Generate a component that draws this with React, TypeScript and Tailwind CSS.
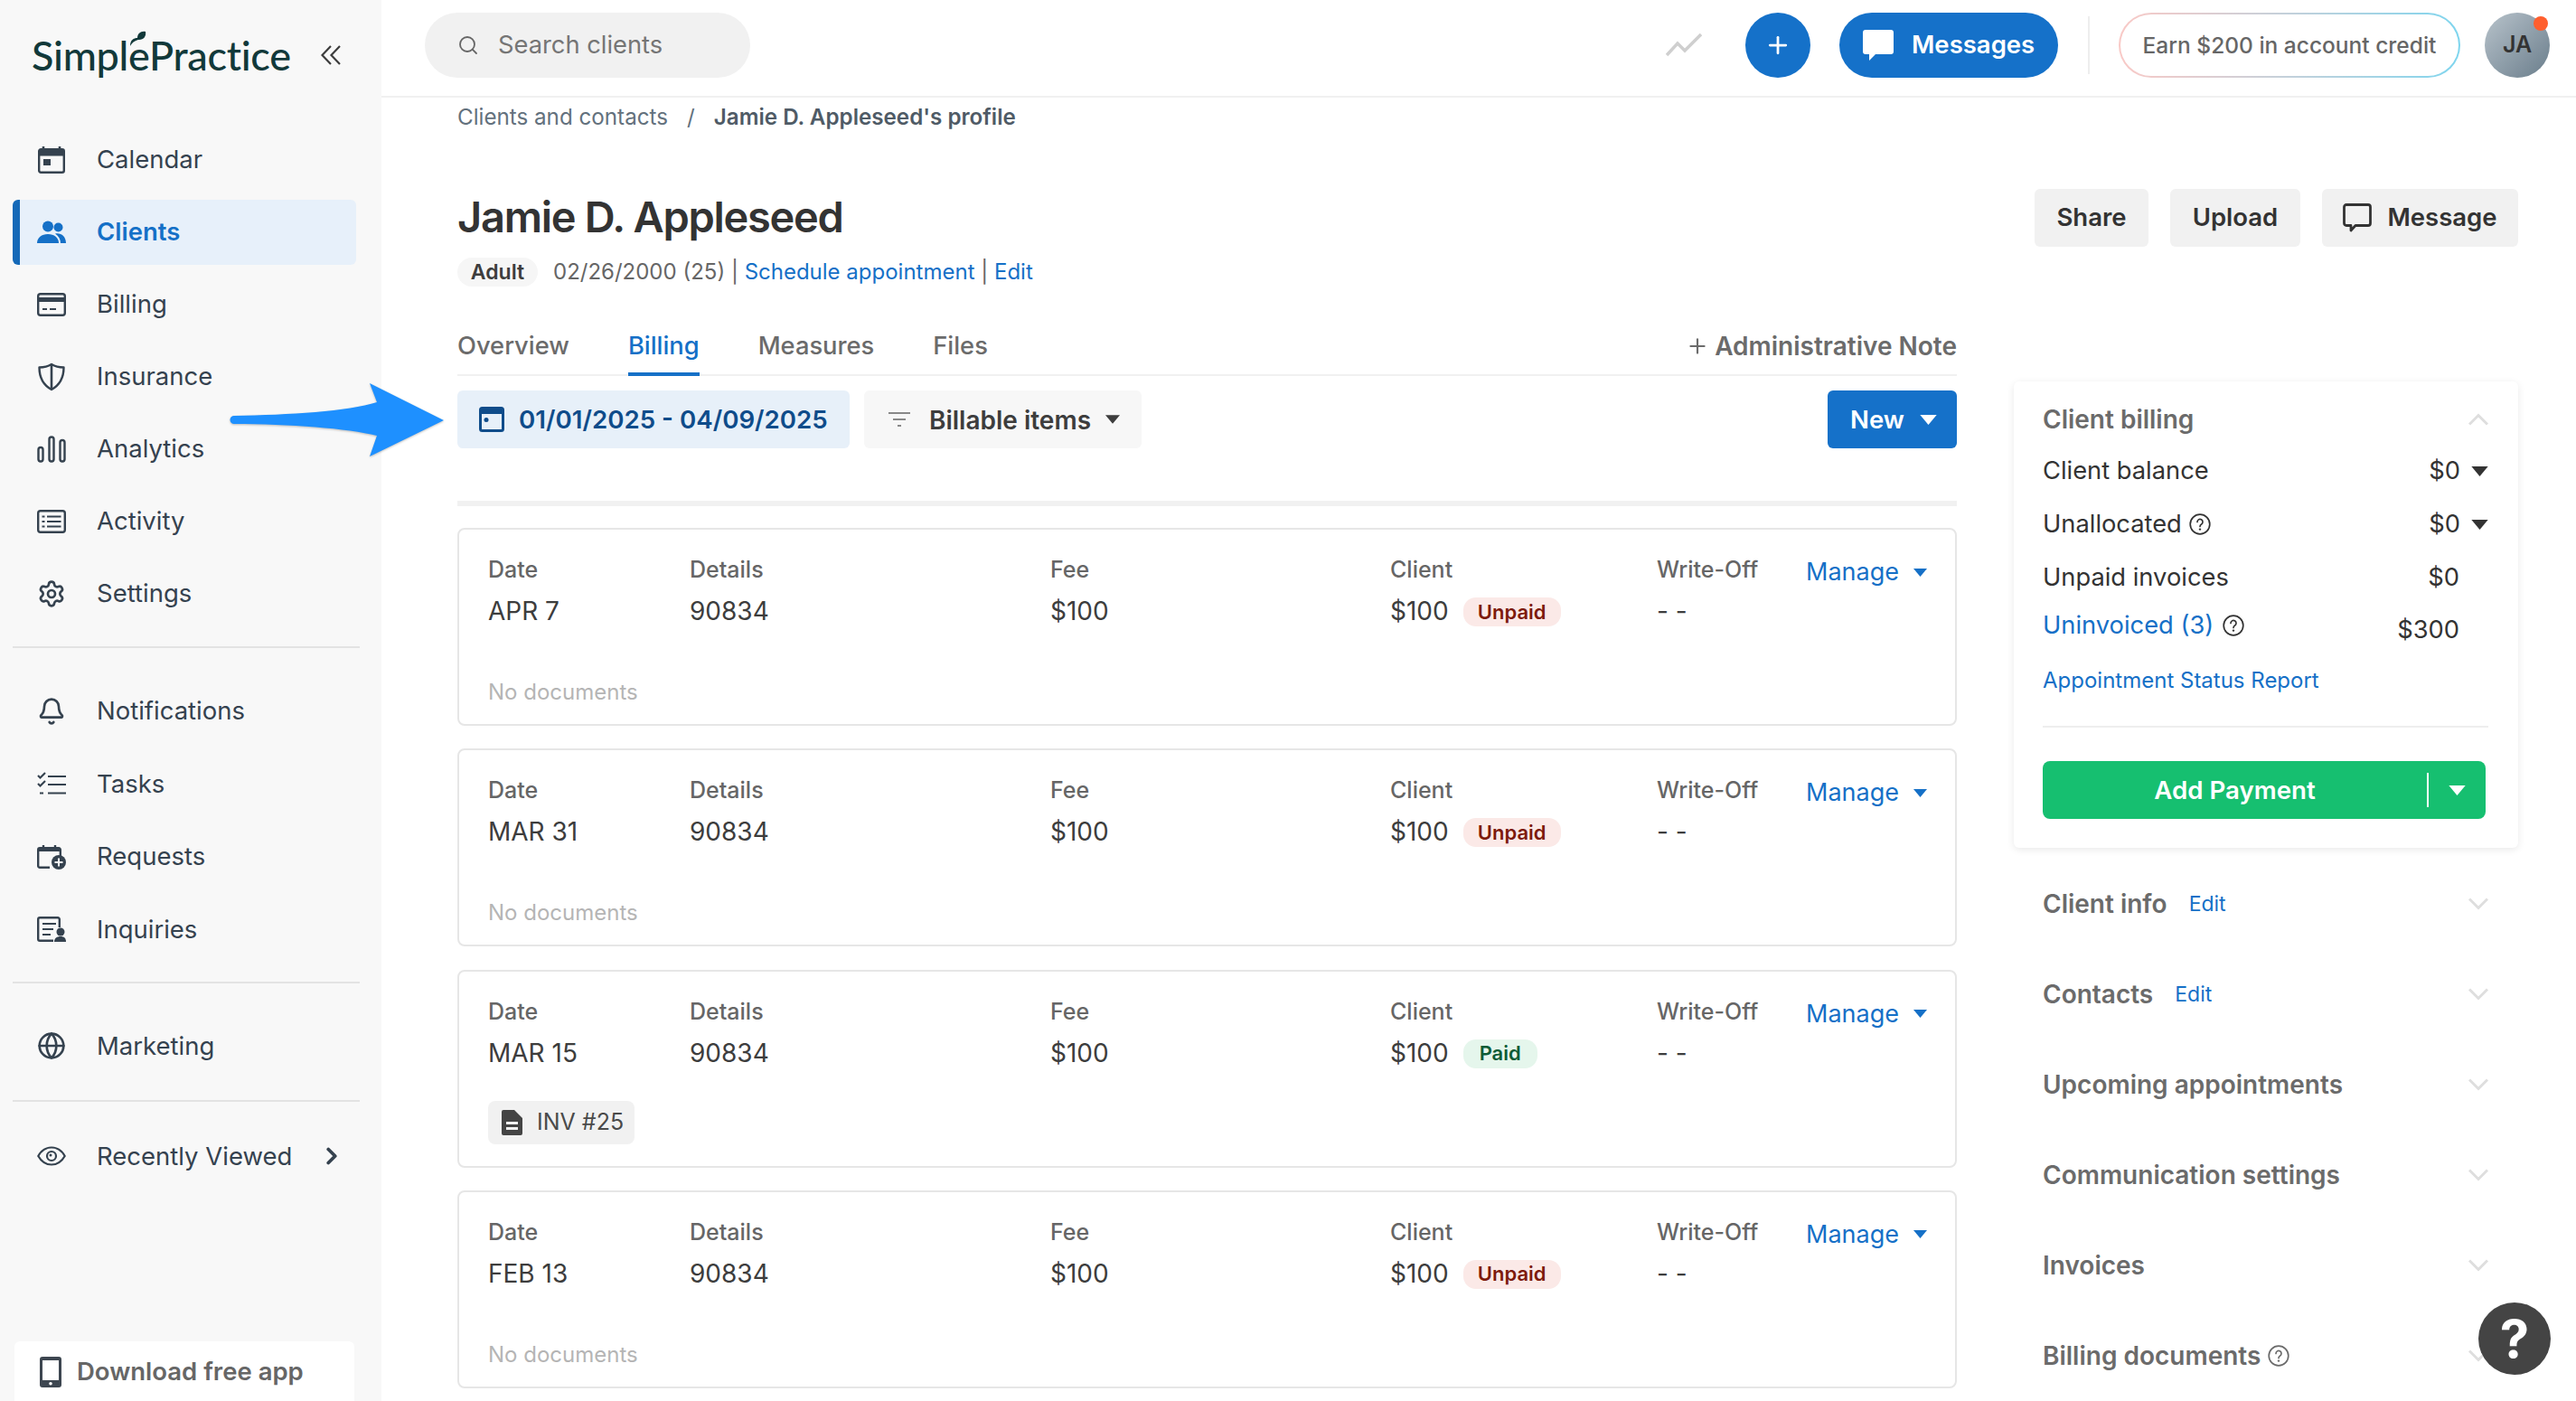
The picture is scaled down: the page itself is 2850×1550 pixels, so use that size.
import { ReactNode } from "react";
import { Bell, ChevronRight, Globe, Plus, Search, Settings } from "lucide-react";

const sz = "h-[32px] w-[32px] shrink-0";

function Caret({ className }: { className?: string }) {
  return (
    <svg viewBox="0 0 10 6" className={className} fill="currentColor">
      <polygon points="0,0 10,0 5,6" />
    </svg>
  );
}

function Fold({ up }: { up?: boolean }) {
  return (
    <svg viewBox="0 0 22 14" className="ml-auto h-[14px] w-[22px] shrink-0 text-[#dedede]" fill="none" stroke="currentColor" strokeWidth="3">
      <path d={up ? "M1 12.500l10-10 10 10" : "M1 1.500l10 10 10-10"} />
    </svg>
  );
}

function Help({ className }: { className?: string }) {
  return (
    <svg viewBox="0 0 24 24" className={className} fill="none" stroke="currentColor" strokeWidth="1.700">
      <circle cx="12" cy="12" r="10.800" />
      <path d="M9 9.500a3 3 0 1 1 4.600 2.500c-1 .6-1.600 1.200-1.600 2.500" strokeLinecap="round" />
      <circle cx="12" cy="17.600" r="1.200" fill="currentColor" stroke="none" />
    </svg>
  );
}

function CalendarIcon() {
  return (
    <svg viewBox="0 0 32 32" className={sz} fill="none">
      <path d="M7 1v4M25 1v4" stroke="currentColor" strokeWidth="2.600" />
      <rect x="2.200" y="4.200" width="27.600" height="25.600" rx="2" stroke="currentColor" strokeWidth="2.400" />
      <rect x="2" y="4" width="28" height="7.500" fill="currentColor" />
      <rect x="7" y="15" width="8" height="7" fill="currentColor" />
    </svg>
  );
}

function ClientsIcon() {
  return (
    <svg viewBox="0 0 32 26" className="h-[26px] w-[32px] shrink-0" fill="currentColor">
      <circle cx="12" cy="6.500" r="6" />
      <circle cx="23.500" cy="7.500" r="5" />
      <path d="M0 25c0-6 5-10 12-10s12 4 12 10z" />
      <path d="M20 14.500c6-1.300 12 2.500 12 10.500h-6c0-4-2-8-6-10.500z" />
    </svg>
  );
}

function BillingIcon() {
  return (
    <svg viewBox="0 0 32 26" className="h-[26px] w-[32px] shrink-0" fill="none" stroke="currentColor">
      <rect x="1.200" y="1.200" width="29.600" height="23.600" rx="2.500" strokeWidth="2.400" />
      <rect x="1" y="5" width="30" height="5" fill="currentColor" stroke="none" />
      <path d="M6 18h5M14 18h7" strokeWidth="2.200" />
    </svg>
  );
}

function ShieldIcon() {
  return (
    <svg viewBox="0 0 32 32" className={sz} fill="none" stroke="currentColor" strokeWidth="2.400">
      <path d="M16 2c4 2.500 9 3.500 13.500 3.500 0 10-3.500 19-13.500 24.500C6 24.500 2.500 15.500 2.500 5.500 7 5.500 12 4.500 16 2z" strokeLinejoin="round" />
      <path d="M16 3v26" strokeWidth="2.600" />
    </svg>
  );
}

function AnalyticsIcon() {
  return (
    <svg viewBox="0 0 32 30" className="h-[30px] w-[32px] shrink-0" fill="none" stroke="currentColor" strokeWidth="2.400">
      <rect x="1.500" y="13" width="5" height="15.500" rx="2.500" />
      <rect x="13.500" y="1.500" width="5" height="27" rx="2.500" />
      <rect x="25.500" y="5" width="5" height="23.500" rx="2.500" />
    </svg>
  );
}

function ActivityIcon() {
  return (
    <svg viewBox="0 0 32 26" className="h-[26px] w-[32px] shrink-0" fill="none" stroke="currentColor">
      <rect x="1.200" y="1.200" width="29.600" height="23.600" rx="2.500" strokeWidth="2.400" />
      <path d="M5.500 7.500h3M5.500 13h3M5.500 18.500h3M11 7.500h15.500M11 13h15.500M11 18.500h15.500" strokeWidth="2.200" />
    </svg>
  );
}

function TasksIcon() {
  return (
    <svg viewBox="0 0 32 26" className="h-[26px] w-[32px] shrink-0" fill="none" stroke="currentColor" strokeWidth="2.200">
      <path d="M1 4l2.500 2.500L9 1M1 13l2.500 2.500L9 10M3 23.500h4M12 5h20M12 14h20M12 23.500h20" />
    </svg>
  );
}

function RequestsIcon() {
  return (
    <svg viewBox="0 0 32 28" className="h-[28px] w-[32px] shrink-0" fill="none" stroke="currentColor">
      <path d="M14 25.800H3a1.800 1.800 0 0 1-1.800-1.800V6A1.800 1.800 0 0 1 3 4.200h21a1.800 1.800 0 0 1 1.800 1.800v8" strokeWidth="2.400" />
      <path d="M7 1v5M20 1v5" strokeWidth="2.400" />
      <rect x="2" y="4" width="23" height="4" fill="currentColor" stroke="none" />
      <circle cx="24" cy="20" r="8" fill="currentColor" stroke="none" />
      <path d="M24 15.500v9M19.500 20h9" stroke="#f8f8f8" strokeWidth="2" />
    </svg>
  );
}

function InquiriesIcon() {
  return (
    <svg viewBox="0 0 32 28" className="h-[28px] w-[32px] shrink-0" fill="none" stroke="currentColor">
      <path d="M18 26.800H3a1.800 1.800 0 0 1-1.800-1.800V3A1.800 1.800 0 0 1 3 1.200h20A1.800 1.800 0 0 1 24.800 3v9" strokeWidth="2.400" />
      <path d="M6 8h15M6 14h12M6 20h9" strokeWidth="2.200" />
      <circle cx="26" cy="17" r="4.500" fill="currentColor" stroke="none" />
      <path d="M19 28c0-4 3-6 7-6s6 2 6 6z" fill="currentColor" stroke="none" />
    </svg>
  );
}

function EyeIcon() {
  return (
    <svg viewBox="0 0 32 22" className="h-[22px] w-[32px] shrink-0" fill="none" stroke="currentColor" strokeWidth="2.200">
      <path d="M1.300 11C5 4.500 10 1.500 16 1.500S27 4.500 30.700 11C27 17.500 22 20.500 16 20.500S5 17.500 1.300 11z" />
      <circle cx="16" cy="11" r="5" />
      <circle cx="15" cy="10" r="1.500" fill="currentColor" stroke="none" />
    </svg>
  );
}

function Logo() {
  return (
    <div className="relative ml-[35px] w-[278px] text-[#12393a]">
      <span className="font-['Lato',sans-serif] text-[45px] leading-[60px] font-medium tracking-[-0.3px] whitespace-nowrap">SimplePractice</span>
      <svg viewBox="0 0 20 18" className="absolute top-[3px] left-[107px] h-[18px] w-[20px]" fill="currentColor">
        <path d="M2 17C2 10 6 8 10 8c0-5 4-8 9-7 1 5-2 9-7 9-3 0-7 2-10 7z" />
      </svg>
    </div>
  );
}

function NavItem({ icon, label, active, right }: { icon: ReactNode; label: string; active?: boolean; right?: ReactNode }) {
  return (
    <div
      className={
        active
          ? "flex h-[72px] items-center rounded-[6px] border-l-[8px] border-[#1469b8] bg-[#e7f0fa] text-[#1570c7]"
          : "flex h-[72px] items-center border-l-[8px] border-transparent text-[#35424f]"
      }
    >
      <span className="flex w-[85px] pl-[19px]">{icon}</span>
      <span className={active ? "text-[27.500px] font-semibold" : "text-[27.500px]"}>{label}</span>
      {right}
    </div>
  );
}

function Sidebar() {
  return (
    <aside className="flex h-full w-[422px] shrink-0 flex-col bg-[#f8f8f8]">
      <div className="flex h-[141px] items-start pt-[31px]">
        <Logo />
        <svg viewBox="0 0 22 22" className="mt-[19px] ml-[42px] h-[22px] w-[22px] text-[#3d3d3d]" fill="none" stroke="currentColor" strokeWidth="2.200">
          <path d="M11 1L1.500 11l9.500 10M21 1l-9.500 10L21 21" />
        </svg>
      </div>
      <nav className="flex w-[394px] flex-col gap-[8px] pl-[14px]">
        <NavItem icon={<CalendarIcon />} label="Calendar" />
        <NavItem icon={<ClientsIcon />} label="Clients" active />
        <NavItem icon={<BillingIcon />} label="Billing" />
        <NavItem icon={<ShieldIcon />} label="Insurance" />
        <NavItem icon={<AnalyticsIcon />} label="Analytics" />
        <NavItem icon={<ActivityIcon />} label="Activity" />
        <NavItem icon={<Settings className={sz} strokeWidth={2} />} label="Settings" />
      </nav>
      <div className="mt-[22px] mr-[24px] ml-[14px] h-[2px] bg-[#e3e3e3]" />
      <nav className="mt-[34px] flex w-[394px] flex-col gap-[8.400px] pl-[14px]">
        <NavItem icon={<Bell className={sz} strokeWidth={2} />} label="Notifications" />
        <NavItem icon={<TasksIcon />} label="Tasks" />
        <NavItem icon={<RequestsIcon />} label="Requests" />
        <NavItem icon={<InquiriesIcon />} label="Inquiries" />
      </nav>
      <div className="mt-[22px] mr-[24px] ml-[14px] h-[2px] bg-[#e3e3e3]" />
      <div className="mt-[33px] w-[394px] pl-[14px]">
        <NavItem icon={<Globe className={sz} strokeWidth={2} />} label="Marketing" />
      </div>
      <div className="mt-[24px] mr-[24px] ml-[14px] h-[2px] bg-[#e3e3e3]" />
      <div className="mt-[24px] w-[394px] pl-[14px]">
        <NavItem
          icon={<EyeIcon />}
          label="Recently Viewed"
          right={<ChevronRight className="ml-auto mr-[12px] h-[30px] w-[30px]" strokeWidth={3} />}
        />
      </div>
      <div className="mt-auto ml-[16px] flex h-[66px] w-[376px] items-center gap-[17px] rounded-t-[6px] bg-white pt-[1px] pl-[28px]">
        <svg viewBox="0 0 24 34" className="h-[34px] w-[24px] shrink-0 text-[#3d4650]" fill="currentColor">
          <path fillRule="evenodd" d="M3 0h18a3 3 0 0 1 3 3v28a3 3 0 0 1-3 3H3a3 3 0 0 1-3-3V3a3 3 0 0 1 3-3zm0 4v22h18V4zm9 24a1.800 1.800 0 1 0 0 3.600A1.800 1.800 0 0 0 12 28z" />
        </svg>
        <span className="text-[27.500px] font-semibold text-[#666]">Download free app</span>
      </div>
    </aside>
  );
}

function TopBar() {
  return (
    <header className="flex h-[108px] items-center border-b-2 border-[#f0f0f0] pr-[29px] pb-[6px] pl-[48px]">
      <div className="flex h-[72px] w-[360px] items-center rounded-full bg-[#f1f1f1] pl-[36px]">
        <Search className="h-[24px] w-[24px] text-[#666]" strokeWidth={1.800} />
        <span className="ml-[21px] text-[27.300px] text-[#757575]">Search clients</span>
      </div>
      <svg viewBox="0 0 40 26" className="mr-[48px] ml-auto h-[26px] w-[40px] text-[#cfcfcf]" fill="none" stroke="currentColor" strokeWidth="3.500">
        <path d="M1 24l12-13 8 8L39 1" />
      </svg>
      <button className="flex h-[72px] w-[72px] items-center justify-center rounded-full bg-[#1571c9] text-white">
        <Plus className="h-[30px] w-[30px]" strokeWidth={2.200} />
      </button>
      <button className="ml-[32px] flex h-[72px] w-[242px] items-center rounded-full bg-[#1571c9] pl-[26px] text-white">
        <svg viewBox="0 0 34 34" className="h-[34px] w-[34px]" fill="currentColor">
          <path d="M3 0h28a3 3 0 0 1 3 3v21a3 3 0 0 1-3 3H14l-7 7v-7H3a3 3 0 0 1-3-3V3a3 3 0 0 1 3-3z" />
        </svg>
        <span className="ml-[20px] text-[27.500px] font-semibold">Messages</span>
      </button>
      <div className="mr-[32px] ml-[33px] h-[64px] w-[2px] bg-[#eeeeee]" />
      <div className="h-[72px] w-[378px] rounded-full bg-linear-to-r from-[#f9c9c6] to-[#7dd5ee] p-[2px]">
        <div className="flex h-full w-full items-center justify-center rounded-full bg-white text-[24.500px] font-medium text-[#666]">
          Earn $200 in account credit
        </div>
      </div>
      <div className="relative ml-[27px] flex h-[72px] w-[72px] items-center justify-center rounded-full bg-linear-to-br from-[#b8c3cb] to-[#6b7e8c] text-[25px] font-semibold text-[#333]">
        JA
        <span className="absolute top-[4px] right-[2px] h-[16px] w-[16px] rounded-full bg-[#ff5f2e]" />
      </div>
    </header>
  );
}

function ChargeCard({ date, status, doc }: { date: string; status: "Unpaid" | "Paid"; doc?: string }) {
  const label = "h-[30px] text-[25px] leading-[30px] font-medium text-[#666]";
  const value = "mt-[16px] h-[30px] text-[28px] leading-[30px] text-[#3d3d3d]";
  return (
    <div className="h-[219px] rounded-[8px] border-2 border-[#e6e6e6] pt-[29px] pl-[32px]">
      <div className="flex">
        <div className="w-[223px]">
          <div className={label}>Date</div>
          <div className={value}>{date}</div>
        </div>
        <div className="w-[399px]">
          <div className={label}>Details</div>
          <div className={value}>90834</div>
        </div>
        <div className="w-[376px]">
          <div className={label}>Fee</div>
          <div className={value}>$100</div>
        </div>
        <div className="w-[295px]">
          <div className={label}>Client</div>
          <div className="mt-[16px] flex h-[30px] items-center">
            <span className="text-[28px] leading-[30px] text-[#3d3d3d]">$100</span>
            <span
              className={
                status === "Paid"
                  ? "mt-[2px] ml-[16px] flex h-[32px] w-[82px] items-center justify-center rounded-[14px] bg-[#e5f6ec] text-[22px] font-semibold text-[#0d5c36]"
                  : "mt-[2px] ml-[16px] flex h-[32px] w-[108px] items-center justify-center rounded-[14px] bg-[#fbe9e7] text-[22px] font-semibold text-[#7d1a0c]"
              }
            >
              {status}
            </span>
          </div>
        </div>
        <div className="w-[165px]">
          <div className={label}>Write-Off</div>
          <div className={value}>- -</div>
        </div>
        <div className="mt-[3px] flex h-[30px] items-center text-[#1570c7]">
          <span className="text-[27px] leading-[30px]">Manage</span>
          <Caret className="ml-[16px] h-[9px] w-[15px]" />
        </div>
      </div>
      {doc ? (
        <div className="mt-[38px] flex h-[48px] w-[162px] items-center rounded-[8px] bg-[#f1f1f1] pl-[15px]">
          <svg viewBox="0 0 23 28" className="h-[28px] w-[23px] text-[#444]" fill="currentColor">
            <path fillRule="evenodd" d="M2 0h12l9 9v17a2 2 0 0 1-2 2H2a2 2 0 0 1-2-2V2a2 2 0 0 1 2-2zm3 13v3h13v-3zm0 6v3h13v-3z" />
          </svg>
          <span className="ml-[16px] pt-[1px] text-[25px] text-[#4a4a4a]">{doc}</span>
        </div>
      ) : (
        <div className="mt-[60px] h-[30px] text-[24px] leading-[30px] text-[#b5b5b5]">No documents</div>
      )}
    </div>
  );
}

function Profile() {
  return (
    <div className="w-[1659px] shrink-0">
      <div className="mt-[7px] flex h-[30px] items-center text-[24.200px] text-[#63717d]">
        <span>Clients and contacts</span>
        <span className="mx-[21px]">/</span>
        <span className="font-semibold text-[#4f5b66]">Jamie D. Appleseed's profile</span>
      </div>
      <h1 className="mt-[65px] h-[60px] text-[47px] leading-[60px] font-semibold tracking-[-1.300px] text-[#333]">Jamie D. Appleseed</h1>
      <div className="mt-[15px] flex h-[32px] items-center text-[24px]">
        <span className="flex h-[32px] w-[89px] items-center justify-center rounded-full bg-[#f6f6f6] text-[23px] font-semibold text-[#3d3d3d]">Adult</span>
        <span className="ml-[17px] whitespace-pre text-[#666]">02/26/2000 (25) | </span>
        <span className="text-[#1570c7]">Schedule appointment</span>
        <span className="whitespace-pre text-[#666]"> | </span>
        <span className="text-[#1570c7]">Edit</span>
      </div>
      <div className="mt-[33px] flex h-[66px] border-b-2 border-[#f1f1f1] text-[27.300px] font-medium text-[#6b6b6b]">
        <span className="h-[66px] pt-[18px] leading-[30px]">Overview</span>
        <span className="ml-[65px] h-[66px] border-b-[4px] border-[#1570c7] pt-[18px] leading-[30px] text-[#1570c7]">Billing</span>
        <span className="ml-[65px] h-[66px] pt-[18px] leading-[30px]">Measures</span>
        <span className="ml-[65px] h-[66px] pt-[18px] leading-[30px]">Files</span>
        <span className="ml-auto flex h-[66px] items-start pt-[18px] text-[28px] leading-[30px] font-semibold">
          <Plus className="mt-[2px] mr-[6px] h-[26px] w-[26px]" strokeWidth={2} />
          Administrative Note
        </span>
      </div>
      <div className="mt-[16px] flex h-[64px]">
        <div className="flex w-[434px] items-center rounded-[6px] bg-[#e7f0f9] pl-[24px] text-[#0f4c8a]">
          <svg viewBox="0 0 28 28" className="h-[28px] w-[28px]" fill="none">
            <rect x="1.500" y="1.500" width="25" height="25" rx="2" stroke="currentColor" strokeWidth="3" />
            <rect x="1" y="1" width="26" height="7" fill="currentColor" />
            <circle cx="8" cy="14.500" r="2.500" fill="currentColor" />
          </svg>
          <span className="ml-[16px] pt-[2px] text-[27.700px] font-semibold">01/01/2025 - 04/09/2025</span>
        </div>
        <div className="ml-[16px] flex w-[307px] items-center rounded-[6px] bg-[#f7f7f7] pl-[27px] text-[#3d3d3d]">
          <svg viewBox="0 0 24 16" className="h-[16px] w-[24px] text-[#888]" fill="none" stroke="currentColor" strokeWidth="2">
            <path d="M0 1h24M5 8h14M10 15h4" />
          </svg>
          <span className="ml-[21px] pt-[2px] text-[28px] font-semibold">Billable items</span>
          <Caret className="ml-[16px] h-[10px] w-[16px]" />
        </div>
        <div className="ml-auto flex w-[143px] items-center rounded-[6px] bg-[#1571c9] pl-[25px] text-white">
          <span className="pt-[2px] text-[27.500px] font-semibold">New</span>
          <Caret className="ml-[17px] h-[11px] w-[19px]" />
        </div>
      </div>
      <div className="mt-[58px] h-[6px] bg-[#f1f1f1]" />
      <div className="mt-[24px] flex flex-col gap-[25.300px]">
        <ChargeCard date="APR 7" status="Unpaid" />
        <ChargeCard date="MAR 31" status="Unpaid" />
        <ChargeCard date="MAR 15" status="Paid" doc="INV #25" />
        <ChargeCard date="FEB 13" status="Unpaid" />
      </div>
    </div>
  );
}

function SideRow({ title, edit, help }: { title: string; edit?: boolean; help?: boolean }) {
  return (
    <div className="flex h-[100px] items-center px-[33px] pl-[32px]">
      <span className="text-[28px] font-semibold text-[#6b6b6b]">{title}</span>
      {edit && <span className="ml-[24px] text-[23px] text-[#1570c7]">Edit</span>}
      {help && <Help className="ml-[8px] h-[24px] w-[24px] text-[#6b6b6b]" />}
      <Fold />
    </div>
  );
}

function BillingPanel() {
  return (
    <div className="h-[516px] rounded-[6px] bg-white px-[33px] pt-[27px] pl-[32px] shadow-[0_2px_8px_rgba(0,0,0,0.09)]">
      <div className="flex h-[30px] items-center justify-between">
        <span className="text-[28px] font-semibold text-[#6b6b6b]">Client billing</span>
        <Fold up />
      </div>
      <div className="mt-[27px] flex h-[30px] items-center text-[27.300px] text-[#333]">
        <span>Client balance</span>
        <span className="ml-auto">$0</span>
        <Caret className="ml-[12px] h-[11px] w-[19px]" />
      </div>
      <div className="mt-[29px] flex h-[30px] items-center text-[27.300px] text-[#333]">
        <span>Unallocated</span>
        <Help className="ml-[8px] h-[24px] w-[24px]" />
        <span className="ml-auto">$0</span>
        <Caret className="ml-[12px] h-[11px] w-[19px]" />
      </div>
      <div className="mt-[29px] flex h-[30px] items-center pr-[32px] text-[27.300px] text-[#333]">
        <span>Unpaid invoices</span>
        <span className="ml-auto">$0</span>
      </div>
      <div className="mt-[20px] flex h-[36px] pr-[32px] text-[27.300px] leading-[36px]">
        <span className="text-[#1570c7]">Uninvoiced (3)</span>
        <Help className="mt-[6px] ml-[10px] h-[24px] w-[24px] text-[#333]" />
        <span className="mt-[5px] ml-auto text-[#333]">$300</span>
      </div>
      <div className="mt-[28px] h-[30px] text-[24px] leading-[30px] text-[#1570c7]">Appointment Status Report</div>
      <div className="mt-[35px] h-[2px] bg-[#eeeeee]" />
      <div className="mt-[37px] flex h-[64px] w-[490px] items-center rounded-[8px] bg-[#16bf70] text-white">
        <span className="flex-1 pt-[1px] text-center text-[27.700px] font-semibold">Add Payment</span>
        <span className="h-[38px] w-[2px] bg-white" />
        <span className="flex w-[63px] justify-center">
          <Caret className="h-[11px] w-[19px]" />
        </span>
      </div>
    </div>
  );
}

function RightColumn() {
  return (
    <div className="ml-[63px] w-[558px] shrink-0">
      <div className="mt-[101px] flex justify-end gap-[24px] text-[27.500px] font-semibold text-[#333]">
        <div className="flex h-[64px] w-[126px] items-center justify-center rounded-[6px] bg-[#f1f1f1]">Share</div>
        <div className="flex h-[64px] w-[144px] items-center justify-center rounded-[6px] bg-[#f1f1f1]">Upload</div>
        <div className="flex h-[64px] w-[217px] items-center justify-center gap-[17px] rounded-[6px] bg-[#f1f1f1]">
          <svg viewBox="0 0 32 32" className="h-[32px] w-[32px]" fill="none" stroke="currentColor" strokeWidth="2.800">
            <path d="M4 1.500h24a2.500 2.500 0 0 1 2.500 2.500v18a2.500 2.500 0 0 1-2.500 2.500H14L9 30v-5.500H4A2.500 2.500 0 0 1 1.500 22V4A2.500 2.500 0 0 1 4 1.500z" strokeLinejoin="round" />
          </svg>
          Message
        </div>
      </div>
      <div className="mt-[149px]">
        <BillingPanel />
      </div>
      <div className="mt-[12px]">
        <SideRow title="Client info" edit />
        <SideRow title="Contacts" edit />
        <SideRow title="Upcoming appointments" />
        <SideRow title="Communication settings" />
        <SideRow title="Invoices" />
        <SideRow title="Billing documents" help />
      </div>
    </div>
  );
}

export default function App() {
  return (
    <div className="relative flex h-[1550px] w-[2850px] overflow-hidden bg-white font-['Inter',sans-serif]">
      <Sidebar />
      <main className="min-w-0 flex-1">
        <TopBar />
        <div className="flex pl-[84px]">
          <Profile />
          <RightColumn />
        </div>
      </main>
      {/* annotation arrow drawn over the page */}
      <svg viewBox="250 420 245 90" className="absolute top-[420px] left-[250px] h-[90px] w-[245px] drop-shadow-[0_1px_1px_rgba(0,0,0,0.25)]" fill="#1e90ff">
        <path d="M259 460C320 459 385 455 417 445L409 424 491 465 409 505 417 482C385 474 320 469 259 469a4.500 4.500 0 0 1 0-9z" />
      </svg>
      <div className="absolute top-[1441px] left-[2742px] flex h-[80px] w-[80px] items-center justify-center rounded-full bg-[#444] text-[58px] leading-none font-bold text-white">
        ?
      </div>
    </div>
  );
}
